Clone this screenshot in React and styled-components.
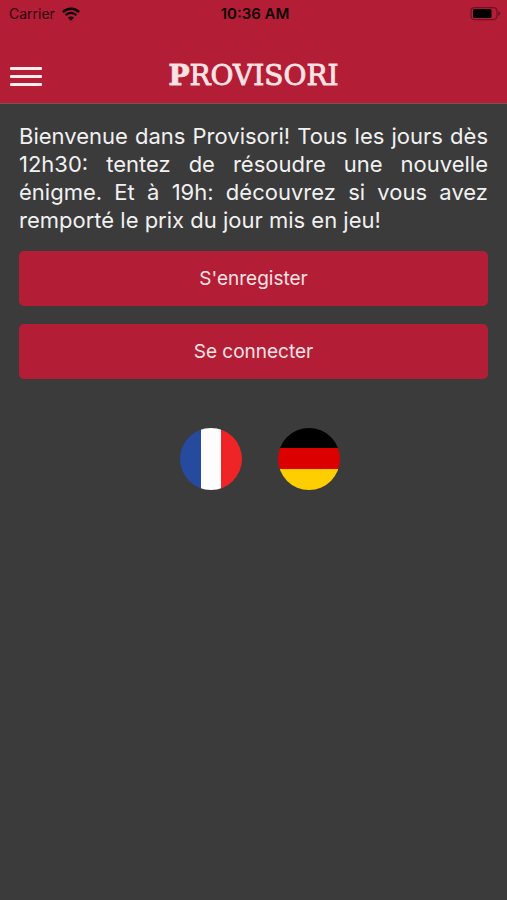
import React from 'react'
import styled, { createGlobalStyle } from 'styled-components';

const App = () => {
    return (
        <>
            <GlobalStyle />
            <Screen>
                <Header>
                    <StatusBar>
                        <Carrier>
                            <span>Carrier</span>
                            <WifiIcon />
                        </Carrier>
                        <Clock>10:36 AM</Clock>
                        <BatteryIcon />
                    </StatusBar>
                    <NavBar>
                        <MenuButton type="button" aria-label="Menu">
                            <span />
                            <span />
                            <span />
                        </MenuButton>
                        <Logo><b>P</b>ROVISORI</Logo>
                    </NavBar>
                </Header>
                <Content>
                    <Intro>
                        Bienvenue dans Provisori! Tous les jours dès 12h30: tentez de résoudre une nouvelle énigme. Et à 19h: découvrez si vous avez remporté le prix du jour mis en jeu!
                    </Intro>
                    <Actions>
                        <ActionButton type="button">S'enregister</ActionButton>
                        <ActionButton type="button">Se connecter</ActionButton>
                    </Actions>
                    <Languages>
                        <FlagButton type="button" aria-label="Français">
                            <FrenchFlag />
                        </FlagButton>
                        <FlagButton type="button" aria-label="Deutsch">
                            <GermanFlag />
                        </FlagButton>
                    </Languages>
                </Content>
            </Screen>
        </>
    )
}

const WifiIcon = () => (
    <svg width="18" height="14" viewBox="0 0 18 14" aria-hidden="true">
        <path d="M0.8 5.1 A11.6 11.6 0 0 1 17.2 5.1" fill="none" stroke="#0d0205" strokeWidth="2.5" />
        <path d="M3.7 8.1 A7.5 7.5 0 0 1 14.3 8.1" fill="none" stroke="#0d0205" strokeWidth="2.3" />
        <path d="M9 13.8 L5.9 10.7 A4.4 4.4 0 0 1 12.1 10.7 Z" fill="#0d0205" />
    </svg>
)

const BatteryIcon = () => (
    <svg width="31" height="14" viewBox="0 0 31 14" aria-hidden="true">
        <rect x="1" y="0.6" width="26" height="12" rx="3.5" fill="none" stroke="#6f1226" strokeWidth="1.2" />
        <rect x="3" y="2.1" width="18.5" height="9" rx="1.5" fill="#000" />
        <path d="M28.2 4.2 Q30.6 5.4 30.6 6.6 Q30.6 7.8 28.2 9 Z" fill="#6f1226" />
    </svg>
)

const FrenchFlag = () => (
    <svg viewBox="0 0 62 62" aria-hidden="true">
        <rect width="21" height="62" fill="#254a9e" />
        <rect x="21" width="20" height="62" fill="#fdfdfd" />
        <rect x="41" width="21" height="62" fill="#ee2427" />
    </svg>
)

const GermanFlag = () => (
    <svg viewBox="0 0 62 62" aria-hidden="true">
        <rect width="62" height="21" fill="#000" />
        <rect y="20" width="62" height="21" fill="#dd0000" />
        <rect y="41" width="62" height="21" fill="#ffce00" />
    </svg>
)

export default App;

const GlobalStyle = createGlobalStyle`
    *{
        box-sizing: border-box;
        margin: 0;
        padding: 0;
    }
    body{
        background-color: #3b3b3b;
        font-family: Inter, "Liberation Sans", sans-serif;
    }
    button{
        border: none;
        background: none;
        font-family: inherit;
        cursor: pointer;
    }
`

const Screen = styled.div`
    min-height: 100vh;
    background-color: #3b3b3b;
`

const Header = styled.header`
    background-color: #b41d36;
    border-bottom: 1px solid #80504f;
`

const StatusBar = styled.div`
    display: grid;
    grid-template-columns: 1fr auto 1fr;
    align-items: center;
    height: 27px;
    padding: 0 6px 0 9px;
    color: #2a060d;
    font-size: 14px;
    > svg{
        justify-self: end;
    }
`

const Carrier = styled.div`
    display: flex;
    align-items: center;
    gap: 7px;
`

const Clock = styled.time`
    color: #0d0205;
    font-size: 15px;
    font-weight: 600;
`

const NavBar = styled.nav`
    display: grid;
    grid-template-columns: 1fr auto 1fr;
    align-items: center;
    height: 76px;
    padding: 22px 10px 0;
`

const MenuButton = styled.button`
    display: flex;
    flex-direction: column;
    justify-self: start;
    gap: 5px;
    padding: 4px 0;
    span{
        width: 32px;
        height: 3px;
        border-radius: 1px;
        background-color: #fdecee;
    }
`

const Logo = styled.h1`
    color: #fbe3e4;
    font-family: "DejaVu Serif", serif;
    font-size: 28px;
    font-weight: 400;
    line-height: 32px;
    -webkit-text-stroke: 1px #f3cdd1;
    paint-order: stroke fill;
    b{
        font-weight: 700;
    }
`

const Content = styled.main`
    padding: 18px 19px;
`

const Intro = styled.p`
    color: #f1f1f1;
    font-size: 22px;
    line-height: 28px;
    text-align: justify;
`

const Actions = styled.div`
    display: flex;
    flex-direction: column;
    gap: 18px;
    margin-top: 17px;
`

const ActionButton = styled.button`
    width: 100%;
    height: 55px;
    border-radius: 5px;
    background-color: #b41d36;
    color: #fbe3e4;
    font-size: 19px;
`

const Languages = styled.div`
    display: flex;
    justify-content: center;
    gap: 36px;
    margin-top: 49px;
    padding-left: 13px;
`

const FlagButton = styled.button`
    width: 62px;
    height: 62px;
    border-radius: 50%;
    overflow: hidden;
    svg{
        display: block;
        width: 100%;
    }
`
